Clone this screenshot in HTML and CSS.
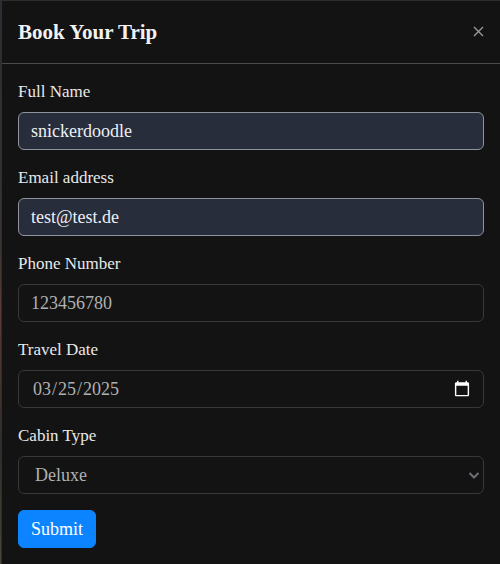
FILE: index.html
```html
<!DOCTYPE html>
<html lang="en">
<head>
<meta charset="utf-8">
<title>Book Your Trip</title>
<link rel="stylesheet" href="styles.css">
</head>
<body>
<div class="modal">
  <div class="modal-header">
    <h5 class="modal-title">Book Your Trip</h5>
    <button class="btn-close" type="button" aria-label="Close">
      <svg width="11" height="11" viewBox="0 0 11 11"><path d="M1 1L10 10M10 1L1 10" stroke="currentColor" stroke-width="1.4" fill="none"/></svg>
    </button>
  </div>
  <form class="modal-body">
    <div class="field">
      <label class="form-label" for="name">Full Name</label>
      <input class="form-control filled" id="name" type="text" value="snickerdoodle">
    </div>
    <div class="field">
      <label class="form-label" for="email">Email address</label>
      <input class="form-control filled" id="email" type="email" value="test@test.de">
    </div>
    <div class="field">
      <label class="form-label" for="phone">Phone Number</label>
      <input class="form-control dim" id="phone" type="tel" value="123456780">
    </div>
    <div class="field">
      <label class="form-label" for="date">Travel Date</label>
      <input class="form-control dim date" id="date" type="date" value="2025-03-25">
    </div>
    <div class="field">
      <label class="form-label" for="cabin">Cabin Type</label>
      <div class="select-wrap">
        <select class="form-control dim form-select" id="cabin">
          <option>Deluxe</option>
          <option>Standard</option>
          <option>Suite</option>
        </select>
        <svg class="chev" width="12" height="9" viewBox="0 0 12 9"><path d="M1.5 2L6 6.5L10.5 2" stroke="#6c6f74" stroke-width="2" fill="none"/></svg>
      </div>
    </div>
    <button class="btn-primary" type="button">Submit</button>
  </form>
</div>
</body>
</html>
```

FILE: styles.css
```css
html, body {
  margin: 0;
  padding: 0;
}
body {
  width: 500px;
  height: 564px;
  overflow: hidden;
  background: linear-gradient(180deg, #2a2d33 0%, #3b3531 45%, #5a3a34 55%, #2e2e2a 80%, #4a4538 100%);
  font-family: "Liberation Serif", "Times New Roman", serif;
  color: #e6e6e6;
}
.modal {
  margin-left: 1px;
  width: 500px;
  height: 565px;
  box-sizing: border-box;
  background: #131313;
  border: 1px solid #2e2e2e;
}
.modal-header {
  display: flex;
  align-items: center;
  justify-content: space-between;
  height: 63px;
  box-sizing: border-box;
  padding: 16px;
  border-bottom: 1px solid #4a4a4a;
}
.modal-title {
  margin: 0;
  font-size: 21px;
  line-height: 30px;
  font-weight: 700;
  color: #f2f2f2;
}
.btn-close {
  display: flex;
  width: 11px;
  height: 11px;
  margin-top: -2px;
  padding: 0;
  border: 0;
  background: none;
  color: #9a9a9a;
}
.modal-body {
  display: flex;
  flex-direction: column;
  align-items: flex-start;
  padding: 16px;
}
.field {
  width: 100%;
  margin-bottom: 16px;
}
.form-label {
  display: block;
  margin-bottom: 8px;
  font-size: 17px;
  line-height: 24px;
  color: #e9e9e9;
}
.form-control {
  display: block;
  width: 100%;
  height: 38px;
  box-sizing: border-box;
  padding: 6px 12px;
  font-family: "Liberation Serif", "Times New Roman", serif;
  font-size: 18px;
  line-height: 24px;
  border: 1px solid #383838;
  border-radius: 6px;
  background: #131313;
  color: #dcdcdc;
  color-scheme: dark;
  outline: none;
}
.form-control.filled {
  background: #272d3b;
  border-color: #8f939b;
  color: #eef0f4;
}
.form-control.dim {
  color: #b0b0b0;
}
.date {
  padding-left: 13px;
  padding-right: 10px;
}
.date::-webkit-calendar-picker-indicator {
  filter: brightness(1.3);
}
.select-wrap {
  position: relative;
}
.form-select {
  appearance: none;
  -webkit-appearance: none;
  padding-left: 16px;
}
.chev {
  position: absolute;
  right: 4px;
  top: 15px;
  pointer-events: none;
}
.btn-primary {
  height: 38px;
  padding: 6px 12px;
  font-family: "Liberation Serif", "Times New Roman", serif;
  font-size: 18px;
  line-height: 24px;
  border: 1px solid #0d84ff;
  border-radius: 6px;
  background: #0d84ff;
  color: #ffffff;
}
```
